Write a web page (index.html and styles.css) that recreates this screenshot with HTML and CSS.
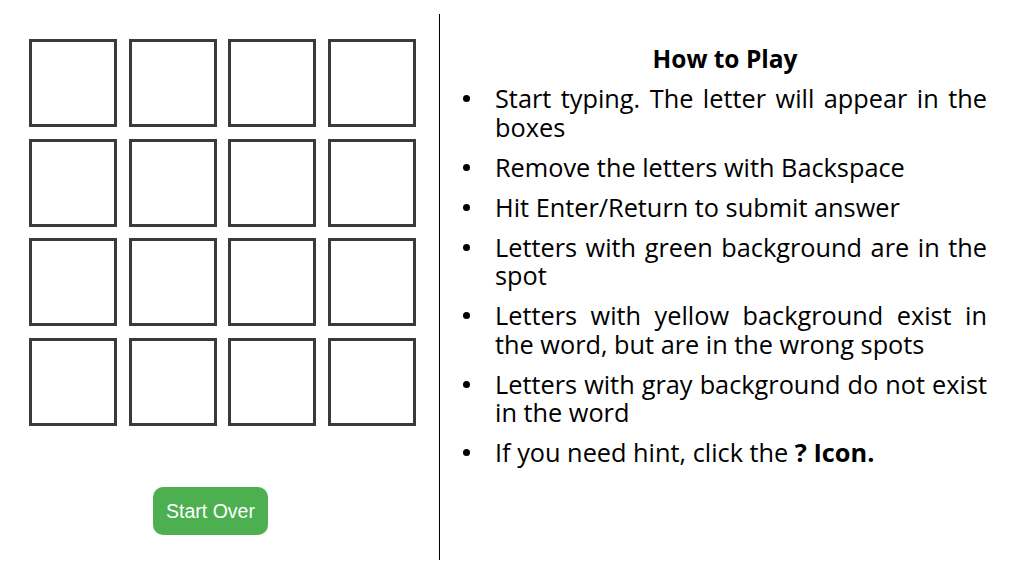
FILE: index.html
```html
<!DOCTYPE html>
<html>
<head>
<meta charset="utf-8">
<link rel="stylesheet" href="styles.css">
</head>
<body>
<div class="page">
  <section class="game">
    <div class="grid">
      <div class="cell"></div><div class="cell"></div><div class="cell"></div><div class="cell"></div>
      <div class="cell"></div><div class="cell"></div><div class="cell"></div><div class="cell"></div>
      <div class="cell"></div><div class="cell"></div><div class="cell"></div><div class="cell"></div>
      <div class="cell"></div><div class="cell"></div><div class="cell"></div><div class="cell"></div>
    </div>
    <button class="restart">Start Over</button>
  </section>
  <div class="divider"></div>
  <section class="help">
    <h1 class="title">How to Play</h1>
    <ul class="rules">
      <li><span class="dot"></span><span class="txt">Start typing. The letter will appear in the boxes</span></li>
      <li><span class="dot"></span><span class="txt">Remove the letters with Backspace</span></li>
      <li><span class="dot"></span><span class="txt">Hit Enter/Return to submit answer</span></li>
      <li><span class="dot"></span><span class="txt">Letters with green background are in the spot</span></li>
      <li><span class="dot"></span><span class="txt">Letters with yellow background exist in the word, but are in the wrong spots</span></li>
      <li><span class="dot"></span><span class="txt">Letters with gray background do not exist in the word</span></li>
      <li><span class="dot"></span><span class="txt">If you need hint, click the <b>? Icon.</b></span></li>
    </ul>
  </section>
</div>
</body>
</html>
```

FILE: styles.css
```css
html, body {
  margin: 0;
  padding: 0;
  background: #ffffff;
}
.page {
  display: flex;
  width: 1015px;
  height: 570px;
}
.game {
  width: 439px;
  display: flex;
  flex-direction: column;
  padding: 39px 0 0 29px;
  box-sizing: border-box;
}
.grid {
  display: grid;
  grid-template-columns: repeat(4, 88px);
  grid-auto-rows: 88px;
  column-gap: 11.7px;
  row-gap: 11.7px;
}
.cell {
  border: 3px solid #3a3a3a;
  box-sizing: border-box;
}
.restart {
  align-self: flex-start;
  margin: 61px 0 0 124px;
  width: 115px;
  height: 48px;
  border: none;
  border-radius: 10px;
  background: #4caf50;
  color: #ffffff;
  font-family: "Liberation Sans", Arial, sans-serif;
  font-size: 19.5px;
  padding: 0;
}
.divider {
  width: 1px;
  background: #000000;
  margin: 14px 0 10px 0;
}
.help {
  flex: 1;
  padding: 0 28px 0 0;
  font-family: "Open Sans", sans-serif;
  color: #000000;
}
.title {
  margin: 44px 0 10px 23px;
  text-align: center;
  font-size: 24.5px;
  font-weight: 700;
  line-height: 30px;
}
.rules {
  list-style: none;
  margin: 0;
  padding: 0;
}
.rules li {
  display: flex;
  align-items: flex-start;
  font-size: 25.3px;
  line-height: 28.5px;
  margin-bottom: 11.5px;
}
.dot {
  flex: none;
  width: 7px;
  height: 7px;
  border-radius: 50%;
  background: #000000;
  margin: 11px 25px 0 23px;
}
.txt {
  flex: 1;
  text-align: justify;
}
.txt b {
  font-weight: 700;
}
```
